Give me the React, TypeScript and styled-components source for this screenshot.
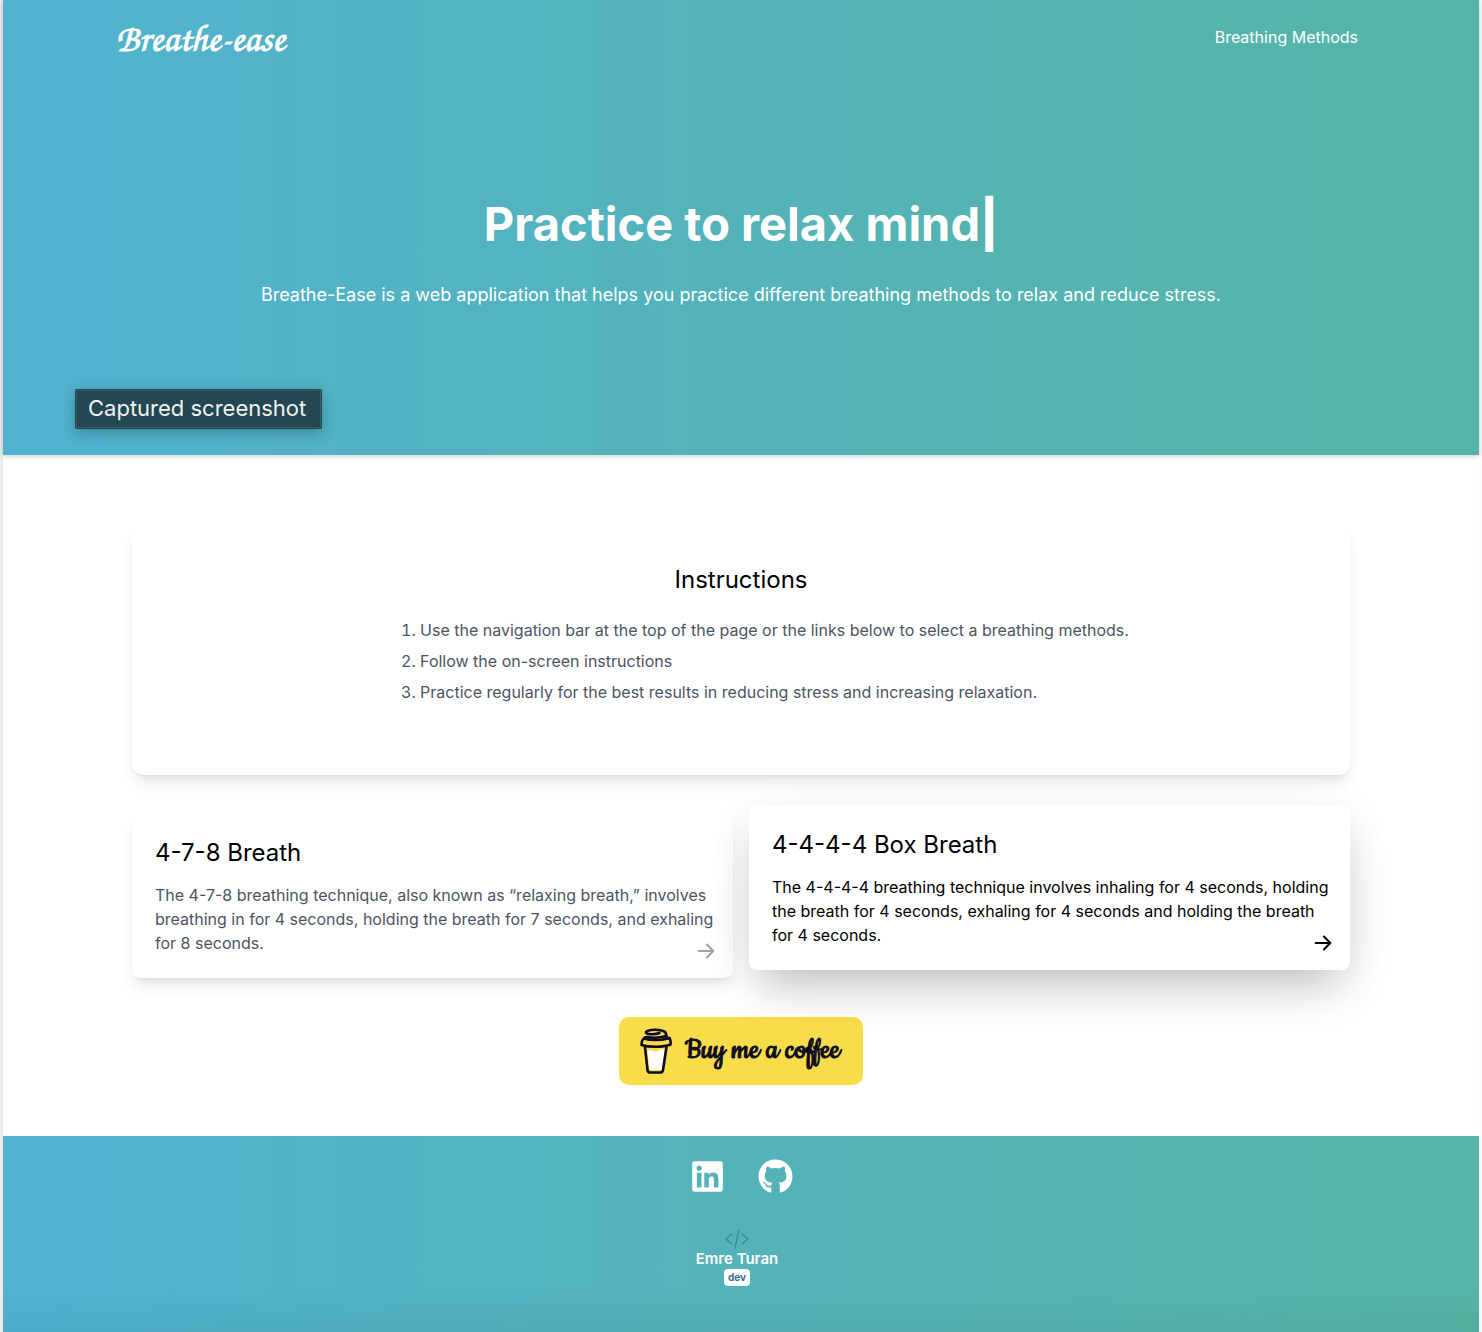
import React from "react";
import styled, { createGlobalStyle } from "styled-components";
import { FaGithub, FaLinkedin } from "react-icons/fa";

const sans = `Inter, "Liberation Sans", sans-serif`;
const brandGradient = "linear-gradient(to right, #50b2d0, #54b3b9 50%, #55b5a5)";

const GlobalStyle = createGlobalStyle`
  *, *::before, *::after { box-sizing: border-box; }
  body { margin: 0; background: #fff; font-family: ${sans}; font-size: 16px; line-height: 24px; color: #000; }
  h1, h2, h3, p, ol { margin: 0; padding: 0; font-weight: 400; }
  a { color: inherit; text-decoration: none; }
`;

const Page = styled.div`
  display: flex;
  flex-direction: column;
  min-height: 100vh;
  border-left: 3px solid #ececec;
  border-right: 3px solid #fcfcfc;
  background: #fff;
`;

const Header = styled.header`
  background: ${brandGradient};
  color: #fff;
  box-shadow: 0 1px 5px rgba(0, 0, 0, 0.22);
  position: relative;
`;

const Nav = styled.nav`
  display: flex;
  align-items: center;
  justify-content: space-between;
  max-width: 1250px;
  height: 74px;
  margin: 0 auto;
  padding-right: 8px;
`;

const Logo = styled.a`
  font-family: "Monotype Corsiva", "Z003", "URW Chancery L", "TeX Gyre Chorus", "Liberation Serif", serif;
  font-weight: 700;
  font-size: 38px;
  line-height: 40px;
  -webkit-text-stroke: 1px #fff;
`;

const NavLink = styled.a`
  font-size: 16px;
`;

const Hero = styled.div`
  display: flex;
  flex-direction: column;
  align-items: center;
  gap: 26px;
  padding: 118px 24px 148px;
  text-align: center;
`;

const Title = styled.h1`
  font-size: 47px;
  line-height: 64px;
  font-weight: 700;
`;

const Caret = styled.span`
  font-weight: 800;
`;

const Tagline = styled.p`
  font-size: 18px;
  line-height: 25px;
`;

const CaptureLabel = styled.div`
  position: absolute;
  left: 72px;
  bottom: 26px;
  padding: 3px 14px 5px 11px;
  border: 2px solid #38606a;
  outline: 1px solid #214650;
  outline-offset: -1px;
  border-radius: 2px;
  background: #244751;
  color: #edf1f2;
  font-size: 22px;
  line-height: 28px;
  box-shadow: 0 4px 14px rgba(0, 0, 0, 0.25);
`;

const Main = styled.main`
  display: flex;
  flex-direction: column;
  flex: 1;
  width: 100%;
  max-width: 1250px;
  margin: 0 auto;
  padding: 70px 16px 51px;
`;

const Instructions = styled.section`
  display: flex;
  flex-direction: column;
  align-items: center;
  gap: 22px;
  padding: 39px 24px 71px;
  border-radius: 12px;
  background: #fff;
  box-shadow: 0 10px 15px -3px rgba(0, 0, 0, 0.1), 0 4px 6px -4px rgba(0, 0, 0, 0.1);
`;

const Heading = styled.h2`
  font-size: 24px;
  line-height: 32px;
`;

const Steps = styled.ol`
  display: flex;
  flex-direction: column;
  gap: 7px;
  padding-left: 48px;
  list-style-position: inside;
  color: #4b5563;
`;

const Cards = styled.div`
  display: grid;
  grid-template-columns: 1fr 1fr;
  gap: 16px;
  margin-top: 38px;
`;

const Card = styled.a<{ $raised?: boolean }>`
  position: relative;
  display: flex;
  flex-direction: column;
  gap: 14px;
  padding: 24px 16px 23px 23px;
  border-radius: 8px;
  background: #fff;
  color: ${(p) => (p.$raised ? "#000" : "#4b5563")};
  transform: ${(p) => (p.$raised ? "translateY(-8px)" : "none")};
  box-shadow: ${(p) =>
    p.$raised
      ? "0 25px 50px -12px rgba(0, 0, 0, 0.22), 0 10px 44px rgba(0, 0, 0, 0.07)"
      : "0 10px 15px -3px rgba(0, 0, 0, 0.1), 0 4px 6px -4px rgba(0, 0, 0, 0.1)"};
`;

const CardTitle = styled.h3`
  font-size: 24px;
  line-height: 32px;
  color: #000;
`;

const CardText = styled.p`
  font-size: 16px;
  line-height: 24px;
`;

const CardArrow = styled.svg<{ $raised?: boolean }>`
  position: absolute;
  right: 16px;
  bottom: 16px;
  width: 22px;
  height: 22px;
  fill: none;
  stroke: ${(p) => (p.$raised ? "#000" : "#9ca3af")};
  stroke-width: 2.2;
  stroke-linecap: round;
  stroke-linejoin: round;
`;

const Coffee = styled.a`
  display: flex;
  align-items: center;
  align-self: center;
  gap: 13px;
  width: 244px;
  height: 68px;
  margin-top: 39px;
  padding: 0 21px;
  border-radius: 10px;
  background: #f8dc4a;
  color: #0d0c22;
`;

const CoffeeText = styled.span`
  font-family: "Cookie", Lato, sans-serif;
  font-weight: 400;
  font-size: 33px;
  line-height: 40px;
  white-space: nowrap;
  -webkit-text-stroke: 1px #0d0c22;
`;

const Footer = styled.footer`
  display: flex;
  flex-direction: column;
  align-items: center;
  padding: 23px 0 46px;
  background: linear-gradient(to bottom, transparent 78%, rgba(0, 0, 0, 0.04)), ${brandGradient};
  color: #fff;
`;

const Socials = styled.div`
  display: flex;
  gap: 33px;
  font-size: 35px;

  svg { display: block; }
`;

const Author = styled.a`
  display: flex;
  flex-direction: column;
  align-items: center;
  margin: 35px 8px 0 0;
  font-size: 15px;
  line-height: 20px;
  font-weight: 600;
`;

const Badge = styled.span`
  padding: 0 4px;
  border-radius: 4px;
  background: #fff;
  color: #36708f;
  font-size: 10px;
  line-height: 17px;
  font-weight: 700;
`;

const Arrow = ({ raised }: { raised?: boolean }) => (
  <CardArrow viewBox="0 0 24 24" $raised={raised} aria-hidden="true">
    <path d="M4 12h16M13 5l7 7-7 7" />
  </CardArrow>
);

const CupIcon = () => (
  <svg width="32" height="46" viewBox="0 0 32 46" fill="none" stroke="#0d0c22" strokeWidth="2.6" strokeLinecap="round" strokeLinejoin="round" aria-hidden="true">
    <path d="M7.5 23c4-3 6 2 10 0 3-2 5-2 7-1l-2 20H9.5z" fill="#fff" stroke="none" />
    <path d="M5 19l2.500 23q.3 2.500 3 2.500h9.500q2.700 0 3-2.500L26.500 19" />
    <path d="M28 10.500C21 12.500 10 12.500 4 10.500Q1.500 12 1.500 17C9 19.500 23 19.500 30.500 16.500q.5-4-1-6.500-.8-.5-1.500 .5" />
    <path d="M4 10.500q1-1.800 3-1.500c6 1 13 .8 18-.7M26.500 9.500q.2-4-2-6C19 .8 9 1.300 6 4c-1 2.500 9 3 13.500 1" />
  </svg>
);

const CodeIcon = () => (
  <svg width="24" height="20" viewBox="0 0 24 20" fill="none" stroke="#3c8199" strokeWidth="1.2" strokeLinecap="round" strokeLinejoin="round" aria-hidden="true">
    <path d="M7 5l-6 5 6 5M17 5l6 5-6 5M14 1l-4 18" />
  </svg>
);

const methods = [
  {
    title: "4-7-8 Breath",
    text: "The 4-7-8 breathing technique, also known as “relaxing breath,” involves breathing in for 4 seconds, holding the breath for 7 seconds, and exhaling for 8 seconds.",
    raised: false,
  },
  {
    title: "4-4-4-4 Box Breath",
    text: "The 4-4-4-4 breathing technique involves inhaling for 4 seconds, holding the breath for 4 seconds, exhaling for 4 seconds and holding the breath for 4 seconds.",
    raised: true,
  },
];

export default function App() {
  return (
    <>
      <GlobalStyle />
      <Page>
        <Header>
          <Nav>
            <Logo href="#">Breathe-ease</Logo>
            <NavLink href="#methods">Breathing Methods</NavLink>
          </Nav>
          <Hero>
            <Title>
              Practice to relax mind<Caret>|</Caret>
            </Title>
            <Tagline>
              Breathe-Ease is a web application that helps you practice different breathing methods to relax and reduce stress.
            </Tagline>
          </Hero>
          <CaptureLabel>Captured screenshot</CaptureLabel>
        </Header>
        <Main>
          <Instructions>
            <Heading>Instructions</Heading>
            <Steps>
              <li>Use the navigation bar at the top of the page or the links below to select a breathing methods.</li>
              <li>Follow the on-screen instructions</li>
              <li>Practice regularly for the best results in reducing stress and increasing relaxation.</li>
            </Steps>
          </Instructions>
          <Cards id="methods">
            {methods.map((m) => (
              <Card key={m.title} href="#" $raised={m.raised}>
                <CardTitle>{m.title}</CardTitle>
                <CardText>{m.text}</CardText>
                <Arrow raised={m.raised} />
              </Card>
            ))}
          </Cards>
          <Coffee href="#">
            <CupIcon />
            <CoffeeText>Buy me a coffee</CoffeeText>
          </Coffee>
        </Main>
        <Footer>
          <Socials>
            <a href="#" aria-label="LinkedIn"><FaLinkedin /></a>
            <a href="#" aria-label="GitHub"><FaGithub /></a>
          </Socials>
          <Author href="#">
            <CodeIcon />
            Emre Turan
            <Badge>dev</Badge>
          </Author>
        </Footer>
      </Page>
    </>
  );
}
